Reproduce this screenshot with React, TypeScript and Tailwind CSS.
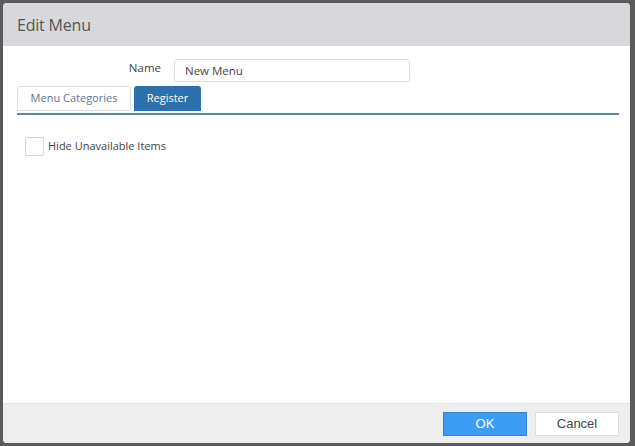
import React from "react";

function App() {
  return (
    <div className="w-[635px] h-[446px] bg-[#5b5b5b] pt-[3px] pl-[3px] pr-[5px] pb-[3px]" style={{ fontFamily: '"Open Sans", "Noto Sans", sans-serif' }}>
      <div className="h-full flex flex-col bg-white rounded-[4px] overflow-hidden">
        {/* header */}
        <div className="h-[43px] shrink-0 bg-[#d8d8dc] flex items-center pl-[14px]">
          <span className="text-[16px] text-[#555] tracking-[-0.2px]">Edit Menu</span>
        </div>

        {/* body */}
        <div className="flex-1 pl-[14px] pr-[11px] pt-[13px]">
          <div className="flex items-center h-[23px]">
            <label className="w-[157px] text-right text-[11.5px] text-[#444] pr-[13px] -mt-[5px]">Name</label>
            <div className="w-[236px] h-[23px] border border-[#dcdcdc] rounded-[3px] flex items-center pl-[10px] text-[11.5px] text-[#444]">
              New Menu
            </div>
          </div>
          <div className="flex gap-[3px] mt-[4px]">
            <div className="w-[114px] h-[25px] border border-[#dcdcdc] rounded-t-[3px] flex items-center justify-center text-[11px] text-[#5e7590]">
              Menu Categories
            </div>
            <div className="w-[67px] h-[25px] bg-[#2d70ad] rounded-t-[3px] flex items-center justify-center text-[11px] text-white">
              Register
            </div>
          </div>
          <div className="mt-[2px] h-[2px] bg-[#5a87aa]"></div>

          <div className="flex items-center mt-[22px] ml-[8px]">
            <div className="w-[19px] h-[19px] border border-[#d6d6d6] rounded-[2px] bg-white"></div>
            <span className="ml-[4px] text-[11px] text-[#444]">Hide Unavailable Items</span>
          </div>
        </div>

        {/* footer */}
        <div className="h-[40px] shrink-0 bg-[#eeeeee] border-t border-[#e6e6e6] flex items-center justify-end gap-[8px] pr-[11px]" style={{ fontFamily: '"Liberation Sans", Arial, sans-serif' }}>
          <button className="w-[84px] h-[24px] bg-[#3b9cf3] border border-[#2f86d6] text-white text-[13px]">OK</button>
          <button className="w-[84px] h-[24px] bg-white border border-[#dddddd] text-[#444] text-[13px]">Cancel</button>
        </div>
      </div>
    </div>
  );
}

export default App;
